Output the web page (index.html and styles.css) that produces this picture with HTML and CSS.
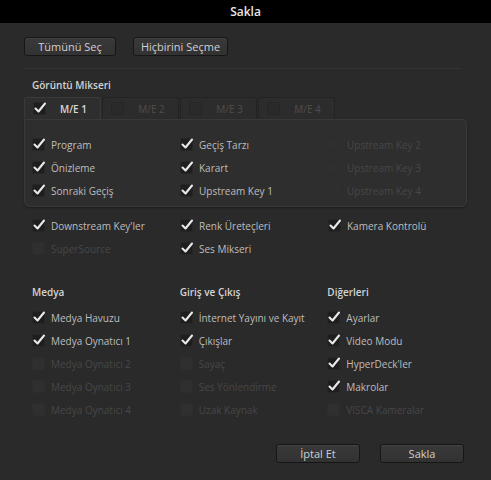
FILE: index.html
```html
<!DOCTYPE html>
<html lang="tr">
<head>
<meta charset="utf-8">
<title>Sakla</title>
<link rel="stylesheet" href="styles.css">
</head>
<body>
<div class="window">
  <div class="titlebar">Sakla</div>
  <div class="content">
    <div class="btn-row">
      <button class="btn btn-all">Tümünü Seç</button>
      <button class="btn btn-none">Hiçbirini Seçme</button>
    </div>
    <div class="sep"></div>
    <div class="heading">Görüntü Mikseri</div>
    <div class="tabs">
      <div class="tab active"><span class="cb on"><svg viewBox="0 0 14 14"><path d="M2.5 7.5 L5.5 10.5 L12 2.5"/></svg></span><span class="tab-label">M/E 1</span></div>
      <div class="tab"><span class="cb off"></span><span class="tab-label">M/E 2</span></div>
      <div class="tab"><span class="cb off"></span><span class="tab-label">M/E 3</span></div>
      <div class="tab"><span class="cb off"></span><span class="tab-label">M/E 4</span></div>
    </div>
    <div class="panel">
      <div class="grid">
        <div class="item"><span class="cb on"><svg viewBox="0 0 14 14"><path d="M2.5 7.5 L5.5 10.5 L12 2.5"/></svg></span>Program</div>
        <div class="item"><span class="cb on"><svg viewBox="0 0 14 14"><path d="M2.5 7.5 L5.5 10.5 L12 2.5"/></svg></span>Geçiş Tarzı</div>
        <div class="item dis"><span class="cb off"></span>Upstream Key 2</div>
        <div class="item"><span class="cb on"><svg viewBox="0 0 14 14"><path d="M2.5 7.5 L5.5 10.5 L12 2.5"/></svg></span>Önizleme</div>
        <div class="item"><span class="cb on"><svg viewBox="0 0 14 14"><path d="M2.5 7.5 L5.5 10.5 L12 2.5"/></svg></span>Karart</div>
        <div class="item dis"><span class="cb off"></span>Upstream Key 3</div>
        <div class="item"><span class="cb on"><svg viewBox="0 0 14 14"><path d="M2.5 7.5 L5.5 10.5 L12 2.5"/></svg></span>Sonraki Geçiş</div>
        <div class="item"><span class="cb on"><svg viewBox="0 0 14 14"><path d="M2.5 7.5 L5.5 10.5 L12 2.5"/></svg></span>Upstream Key 1</div>
        <div class="item dis"><span class="cb off"></span>Upstream Key 4</div>
      </div>
    </div>
    <div class="grid extra">
      <div class="item"><span class="cb on"><svg viewBox="0 0 14 14"><path d="M2.5 7.5 L5.5 10.5 L12 2.5"/></svg></span>Downstream Key'ler</div>
      <div class="item"><span class="cb on"><svg viewBox="0 0 14 14"><path d="M2.5 7.5 L5.5 10.5 L12 2.5"/></svg></span>Renk Üreteçleri</div>
      <div class="item"><span class="cb on"><svg viewBox="0 0 14 14"><path d="M2.5 7.5 L5.5 10.5 L12 2.5"/></svg></span>Kamera Kontrolü</div>
      <div class="item dis"><span class="cb off"></span>SuperSource</div>
      <div class="item"><span class="cb on"><svg viewBox="0 0 14 14"><path d="M2.5 7.5 L5.5 10.5 L12 2.5"/></svg></span>Ses Mikseri</div>
      <div class="item empty"></div>
    </div>
    <div class="columns">
      <div class="col">
        <div class="col-head">Medya</div>
        <div class="item"><span class="cb on"><svg viewBox="0 0 14 14"><path d="M2.5 7.5 L5.5 10.5 L12 2.5"/></svg></span>Medya Havuzu</div>
        <div class="item"><span class="cb on"><svg viewBox="0 0 14 14"><path d="M2.5 7.5 L5.5 10.5 L12 2.5"/></svg></span>Medya Oynatıcı 1</div>
        <div class="item dis"><span class="cb off"></span>Medya Oynatıcı 2</div>
        <div class="item dis"><span class="cb off"></span>Medya Oynatıcı 3</div>
        <div class="item dis"><span class="cb off"></span>Medya Oynatıcı 4</div>
      </div>
      <div class="col">
        <div class="col-head">Giriş ve Çıkış</div>
        <div class="item"><span class="cb on"><svg viewBox="0 0 14 14"><path d="M2.5 7.5 L5.5 10.5 L12 2.5"/></svg></span>İnternet Yayını ve Kayıt</div>
        <div class="item"><span class="cb on"><svg viewBox="0 0 14 14"><path d="M2.5 7.5 L5.5 10.5 L12 2.5"/></svg></span>Çıkışlar</div>
        <div class="item dis"><span class="cb off"></span>Sayaç</div>
        <div class="item dis"><span class="cb off"></span>Ses Yönlendirme</div>
        <div class="item dis"><span class="cb off"></span>Uzak Kaynak</div>
      </div>
      <div class="col">
        <div class="col-head">Diğerleri</div>
        <div class="item"><span class="cb on"><svg viewBox="0 0 14 14"><path d="M2.5 7.5 L5.5 10.5 L12 2.5"/></svg></span>Ayarlar</div>
        <div class="item"><span class="cb on"><svg viewBox="0 0 14 14"><path d="M2.5 7.5 L5.5 10.5 L12 2.5"/></svg></span>Video Modu</div>
        <div class="item"><span class="cb on"><svg viewBox="0 0 14 14"><path d="M2.5 7.5 L5.5 10.5 L12 2.5"/></svg></span>HyperDeck'ler</div>
        <div class="item"><span class="cb on"><svg viewBox="0 0 14 14"><path d="M2.5 7.5 L5.5 10.5 L12 2.5"/></svg></span>Makrolar</div>
        <div class="item dis"><span class="cb off"></span>VISCA Kameralar</div>
      </div>
    </div>
    <div class="footer">
      <button class="btn btn-foot">İptal Et</button>
      <button class="btn btn-foot">Sakla</button>
    </div>
  </div>
</div>
</body>
</html>
```

FILE: styles.css
```css
* { box-sizing: border-box; }
html, body { margin: 0; padding: 0; }
body {
  width: 491px;
  height: 480px;
  background: #2a2a2a;
  font-family: "Open Sans", "Noto Sans", sans-serif;
  font-size: 10px;
  color: #bdbdbd;
  overflow: hidden;
}
.window { width: 491px; height: 480px; display: flex; flex-direction: column; }
.titlebar {
  height: 23px;
  background: #000;
  color: #e6e6e6;
  font-size: 12px;
  font-weight: 600;
  display: flex;
  align-items: center;
  justify-content: center;
  flex-shrink: 0;
}
.content { padding: 14px 24px 0 24px; display: flex; flex-direction: column; }
.btn-row { display: flex; gap: 17px; height: 19px; }
.btn {
  height: 19px;
  padding: 0;
  border: 1px solid #161616;
  border-radius: 3px;
  background: linear-gradient(#393939, #323232);
  box-shadow: inset 0 1px 0 rgba(255,255,255,0.05);
  color: #d0d0d0;
  font-family: "Open Sans", "Noto Sans", sans-serif;
  font-size: 11px;
  line-height: 17px;
}
.btn-all { width: 92px; }
.btn-none { width: 95px; }
.sep { height: 1px; background: #343434; margin: 12px 5px 0 0; }
.heading {
  margin-top: 9px;
  padding-left: 8px;
  height: 15px;
  line-height: 15px;
  font-weight: 600;
  color: #d4d4d4;
}
.tabs { display: flex; margin-top: 4px; height: 22px; }
.tab {
  width: 77px;
  height: 22px;
  display: flex;
  align-items: center;
  padding-left: 8px;
  background: #2c2c2c;
  border: 1px solid #232323;
  border-bottom: none;
  border-radius: 3px 3px 0 0;
  color: #4e4e4e;
  margin-right: 1px;
}
.tab.active {
  background: #2e2e2e;
  border-color: #3a3a3a;
  color: #d8d8d8;
  font-weight: 600;
}
.tab-label { flex: 1; text-align: center; padding-right: 5px; }
.panel {
  height: 88px;
  border: 1px solid #393939;
  border-radius: 0 4px 5px 5px;
  background: #2e2e2e;
  box-shadow: 0 1px 2px rgba(0,0,0,0.35);
  padding: 13px 0 0 7px;
}
.grid { display: grid; grid-template-columns: 148px 148px 140px; grid-auto-rows: 23px; }
.extra { padding: 7px 0 0 8px; }
.item { display: flex; align-items: center; height: 23px; white-space: nowrap; }
.item.dis { color: #474747; }
.cb {
  width: 13px;
  height: 13px;
  border-radius: 2px;
  background: #1e1e1e;
  border: 1px solid #262626;
  margin-right: 6px;
  flex-shrink: 0;
  position: relative;
}
.cb.off { background: #2f2f2f; border-color: #2d2d2d; }
.tab .cb.off { background: #2a2a2a; border-color: #262626; }
.cb svg {
  position: absolute;
  left: -1px;
  top: -2px;
  width: 14px;
  height: 14px;
  overflow: visible;
}
.cb svg path { fill: none; stroke: #e8e8e8; stroke-width: 2.1; stroke-linecap: round; stroke-linejoin: round; }
.columns { display: flex; padding: 22px 0 0 8px; }
.col { width: 148px; display: flex; flex-direction: column; }
.col:last-child { width: 140px; }
.col-head { height: 20px; line-height: 20px; font-weight: 600; color: #d4d4d4; margin-bottom: 4px; }
.footer { display: flex; justify-content: flex-end; gap: 20px; margin-top: 23px; padding-right: 3px; }
.btn-foot { width: 84px; }
```
